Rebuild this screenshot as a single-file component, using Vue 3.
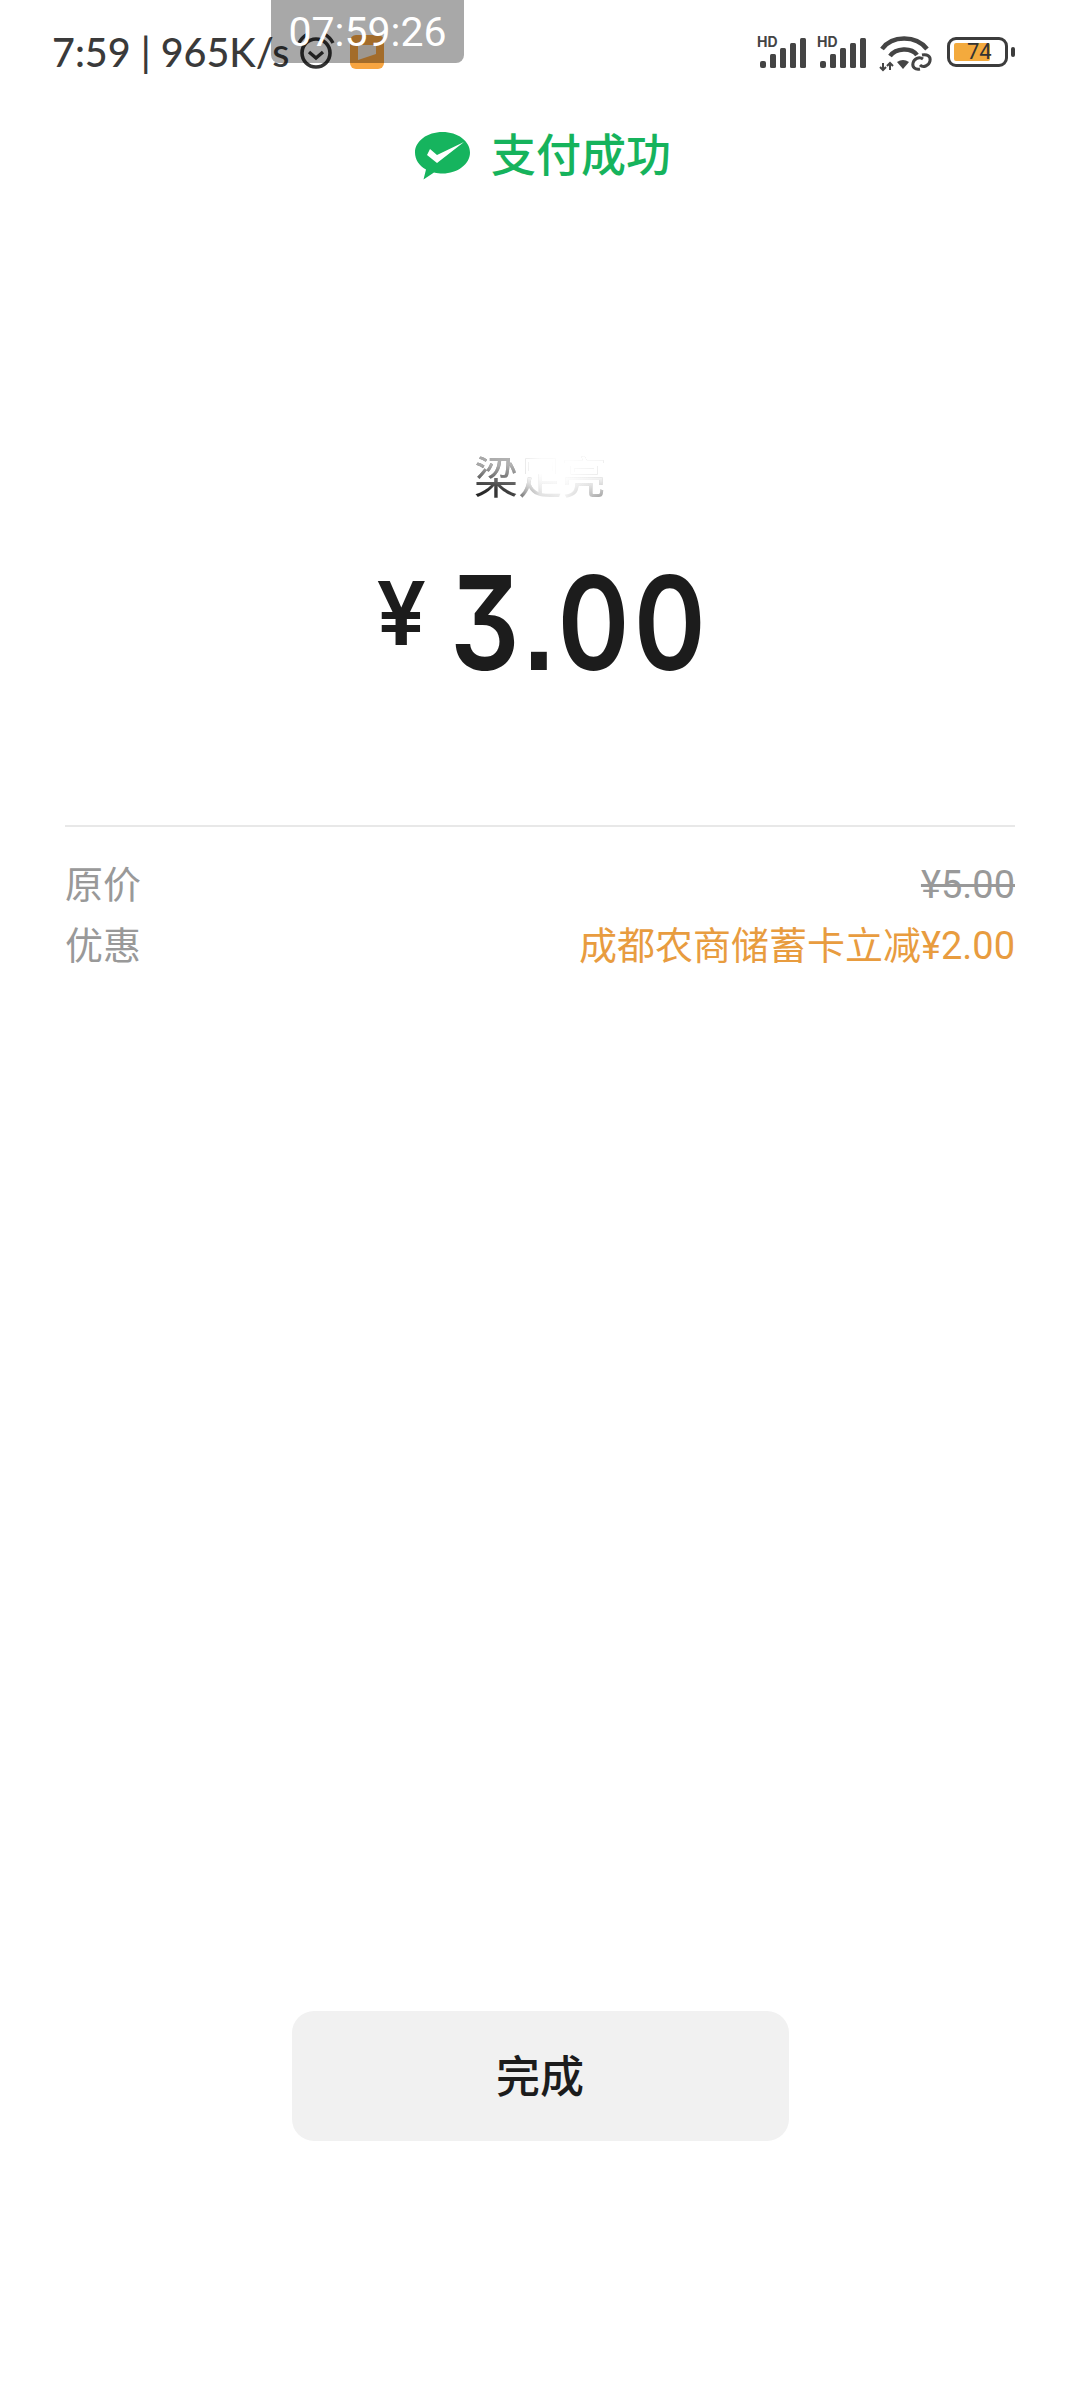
<template>
  <div class="page">
    <div class="status-bar">
      <span class="status-text">7:59 | 965K/s</span>
      <svg class="alarm" width="40" height="40" viewBox="0 0 40 40">
        <circle cx="20" cy="21" r="14" fill="none" stroke="#333" stroke-width="3.6" />
        <path d="M13 20l7 6 7-6" fill="none" stroke="#333" stroke-width="3.4" />
        <path d="M3 11c2-4 5-7 9-9M37 11c-2-4-5-7-9-9" fill="none" stroke="#333" stroke-width="3.4" />
      </svg>
      <svg class="app-badge" width="34" height="34" viewBox="0 0 34 34">
        <rect width="34" height="34" rx="6" fill="#f7a541" />
        <path d="M8 25V10h18v9z" fill="#efe6da" />
      </svg>
      <div class="status-right">
        <div v-for="n in 2" :key="n" class="signal">
          <span class="hd">HD</span>
          <svg width="50" height="32" viewBox="0 0 50 32">
            <rect x="3" y="24" width="6" height="7" rx="2" fill="#444" />
            <rect x="13" y="17" width="6" height="14" rx="1.500" fill="#444" />
            <rect x="23" y="11" width="6" height="20" rx="1.500" fill="#444" />
            <rect x="33" y="6" width="6" height="25" rx="1.500" fill="#444" />
            <rect x="43" y="1" width="6" height="30" rx="1.500" fill="#444" />
          </svg>
        </div>
        <svg class="wifi" width="54" height="38" viewBox="0 0 54 38">
          <path d="M3 15C13 1 37 1 48 15" fill="none" stroke="#444" stroke-width="4.500" />
          <path d="M11 22C17 14 32 13 38 21" fill="none" stroke="#444" stroke-width="4.500" />
          <path d="M18 28Q24 24 30 28L24 35z" fill="#444" />
          <path d="M4 29v7M1 33l3 3 3-3M11 36v-7M8 32l3-3 3 3" fill="none" stroke="#444" stroke-width="2" />
          <path d="M41 35c-5 1-8-2-7-6s6-7 10-4M43 21c5-1 9 1 8 6s-7 7-10 4" fill="none" stroke="#444" stroke-width="3" />
        </svg>
        <div class="battery">
          <div class="battery-body">
            <div class="battery-fill"></div>
            <span class="battery-num">74</span>
          </div>
          <div class="battery-tip"></div>
        </div>
      </div>
      <div class="timer">07:59:26</div>
    </div>

    <div class="title-row">
      <svg width="56" height="50" viewBox="0 0 56 50">
        <path d="M27.500 0C12.300 0 0 9 0 20.500c0 7 4 13 11 17l-2.500 10 10.500-7c3 .8 6 1 8.500 1C42.700 41.500 55 32 55 20.500S42.700 0 27.500 0z" fill="#16b45e" />
        <path d="M15 17L12 23L22 31L49 10L22 23z" fill="#fff" />
      </svg>
      <span class="title">支付成功</span>
    </div>

    <div class="payee">梁足亮</div>

    <div class="amount">
      <span class="currency">¥</span>
      <span class="digits">3.00</span>
    </div>

    <div class="detail">
      <div class="detail-row">
        <span class="label">原价</span>
        <span class="price-old">¥5.00</span>
      </div>
      <div class="detail-row">
        <span class="label">优惠</span>
        <span class="discount">成都农商储蓄卡立减¥2.00</span>
      </div>
    </div>

    <button class="done">完成</button>
  </div>
</template>

<script setup>
</script>

<style scoped>
.page {
  width: 1080px;
  height: 2400px;
  background: #fff;
  display: flex;
  flex-direction: column;
  font-family: Roboto, "Noto Sans CJK SC", sans-serif;
  overflow: hidden;
}
.status-bar {
  position: relative;
  height: 100px;
  display: flex;
  align-items: flex-start;
  padding: 28px 65px 0 52px;
  box-sizing: border-box;
  flex-shrink: 0;
}
.status-text {
  font-family: Lato, sans-serif;
  font-size: 39.500px;
  font-weight: 500;
  line-height: 48px;
  color: #3a3a3a;
  white-space: nowrap;
  width: 244px;
}
.alarm { margin-top: 4px; flex-shrink: 0; }
.app-badge { margin: 7px 0 0 14px; flex-shrink: 0; }
.status-right {
  margin-left: auto;
  display: flex;
  align-items: flex-start;
  gap: 10px;
}
.signal {
  position: relative;
  width: 50px;
  height: 32px;
  margin-top: 9px;
}
.signal svg { display: block; }
.hd {
  position: absolute;
  left: 0;
  top: -2px;
  font-family: Inter, sans-serif;
  font-size: 14px;
  font-weight: 700;
  line-height: 14px;
  color: #444;
}
.wifi { margin: 6px 4px 0 2px; }
.battery {
  display: flex;
  align-items: center;
  gap: 3px;
  margin-top: 9px;
}
.battery-body {
  position: relative;
  width: 61px;
  height: 30px;
  border: 3px solid #3c3c3c;
  border-radius: 9px;
  box-sizing: border-box;
}
.battery-fill {
  position: absolute;
  left: 4px;
  top: 3px;
  width: 36px;
  height: 18px;
  background: #f3aa3d;
  border-radius: 2px;
}
.battery-num {
  position: absolute;
  left: 17px;
  top: 0;
  font-size: 22px;
  line-height: 24px;
  color: #333;
}
.battery-tip {
  width: 4px;
  height: 10px;
  background: #3c3c3c;
  border-radius: 2px;
}
.timer {
  position: absolute;
  left: 271px;
  top: 0;
  width: 193px;
  height: 63px;
  background: rgba(0, 0, 0, 0.34);
  border-radius: 0 0 8px 8px;
  color: #fff;
  font-size: 41px;
  font-weight: 400;
  line-height: 65px;
  text-align: center;
}
.title-row {
  display: flex;
  justify-content: center;
  align-items: center;
  gap: 20px;
  margin-top: 32px;
  height: 50px;
  padding-left: 6px;
}
.title {
  font-size: 45px;
  font-weight: 500;
  color: #16b35c;
  line-height: 50px;
}
.payee {
  margin-top: 269px;
  text-align: center;
  font-size: 44px;
  line-height: 56px;
  color: transparent;
  background-image:
    linear-gradient(180deg, #fff 40%, rgba(255, 255, 255, 0) 85%),
    linear-gradient(180deg, rgba(255, 255, 255, 0.6) 25%, rgba(255, 255, 255, 0) 70%),
    linear-gradient(90deg, #222 0%, #444 30%, #ddd 50%, #eee 70%, #999 100%);
  background-size: 66% 100%, 100% 100%, 100% 100%;
  background-position: right top, left top, left top;
  background-repeat: no-repeat;
  -webkit-background-clip: text;
  background-clip: text;
  align-self: center;
  width: 132px;
}
.amount {
  margin-top: 56px;
  height: 120px;
  display: flex;
  justify-content: center;
  align-items: flex-start;
  color: #1c1c1c;
  font-family: Inter, sans-serif;
  font-weight: 500;
  line-height: 120px;
  padding-left: 8px;
}
.currency {
  font-size: 88px;
  font-weight: 600;
  line-height: 100px;
  margin: 0 24px 0 0;
}
.digits {
  display: inline-block;
  font-size: 130px;
  font-weight: 600;
  font-feature-settings: "cv09", "ss07";
  letter-spacing: 5px;
  transform: scaleX(0.84);
  transform-origin: left top;
  margin-right: -48px;
}
.detail {
  margin: 142px 65px 0;
  border-top: 2px solid #e8e8e8;
  padding-top: 33px;
  display: flex;
  flex-direction: column;
  gap: 11px;
}
.detail-row {
  display: flex;
  justify-content: space-between;
  align-items: center;
  font-size: 38px;
  line-height: 50px;
}
.label { color: #999; }
.price-old { color: #999; text-decoration: line-through; }
.discount { color: #e89c3f; }
.done {
  margin: auto auto 259px;
  width: 497px;
  height: 130px;
  padding: 0 0 5px;
  background: #f1f1f1;
  border: none;
  border-radius: 22px;
  font-family: inherit;
  font-size: 44px;
  font-weight: 500;
  color: #1c1c1c;
}
</style>
